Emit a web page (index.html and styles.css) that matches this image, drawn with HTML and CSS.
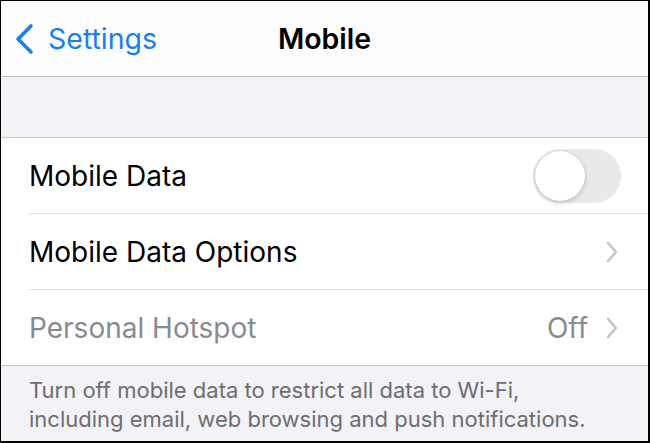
FILE: index.html
```html
<!DOCTYPE html>
<html>
<head>
<meta charset="utf-8">
<link rel="stylesheet" href="styles.css">
</head>
<body>
<div class="frame">
  <header class="nav">
    <div class="back">
      <svg class="back-icon" width="22" height="32" viewBox="0 0 22 32"><path d="M17 3 L4 16 L17 29" fill="none" stroke="#1a7ff2" stroke-width="3.6" stroke-linecap="round" stroke-linejoin="round"/></svg>
      <span class="back-label">Settings</span>
    </div>
    <div class="title">Mobile</div>
  </header>
  <div class="spacer"></div>
  <section class="group">
    <div class="row">
      <span class="label">Mobile Data</span>
      <span class="toggle"><span class="knob"></span></span>
    </div>
    <div class="row">
      <span class="label">Mobile Data Options</span>
      <svg class="chev" width="14" height="22" viewBox="0 0 14 22"><path d="M3 2 L11 11 L3 20" fill="none" stroke="#c4c4c7" stroke-width="2.6" stroke-linecap="round" stroke-linejoin="round"/></svg>
    </div>
    <div class="row last">
      <span class="label dim">Personal Hotspot</span>
      <span class="value">Off</span>
      <svg class="chev" width="14" height="22" viewBox="0 0 14 22"><path d="M3 2 L11 11 L3 20" fill="none" stroke="#c4c4c7" stroke-width="2.6" stroke-linecap="round" stroke-linejoin="round"/></svg>
    </div>
  </section>
  <footer class="note">Turn off mobile data to restrict all data to Wi-Fi,<br>including email, web browsing and push notifications.</footer>
</div>
</body>
</html>
```
FILE: styles.css
```css
html, body {
  margin: 0;
  padding: 0;
  background: #000;
}
.frame {
  width: 647px;
  height: 440px;
  border-style: solid;
  border-color: #000;
  border-width: 1px 2px 2px 1px;
  background: #f2f2f7;
  font-family: Inter, "Liberation Sans", sans-serif;
  overflow: hidden;
  display: flex;
  flex-direction: column;
}
.nav {
  height: 75px;
  background: #fdfdfd;
  border-bottom: 1px solid #b9b9bc;
  display: flex;
  align-items: center;
  position: relative;
}
.back {
  display: flex;
  align-items: center;
  padding-left: 13px;
  gap: 12px;
  color: #1a7ff2;
}
.back-icon {
  display: block;
}
.back-label {
  font-size: 28.5px;
}
.title {
  position: absolute;
  left: 0;
  right: 0;
  text-align: center;
  font-size: 28.5px;
  font-weight: 600;
  color: #000;
  pointer-events: none;
}
.spacer {
  height: 60px;
  border-bottom: 1px solid #c8c8cc;
}
.group {
  background: #fff;
  padding-left: 28px;
  border-bottom: 1px solid #c8c8cc;
}
.row {
  height: 75px;
  display: flex;
  align-items: center;
  padding-right: 28px;
  border-bottom: 1px solid #e2e2e4;
}
.row.last {
  border-bottom: none;
}
.label {
  flex: 1;
  font-size: 28px;
  color: #000;
}
.label.dim, .value {
  color: #8a8a8e;
}
.value {
  font-size: 28px;
  margin-right: 17px;
}
.chev {
  display: block;
  margin-right: 1px;
}
.toggle {
  width: 88px;
  height: 54px;
  border-radius: 27px;
  background: #e9e9eb;
  position: relative;
  margin-right: -1px;
}
.knob {
  position: absolute;
  left: 2px;
  top: 2px;
  width: 50px;
  height: 50px;
  border-radius: 50%;
  background: #fff;
  box-shadow: 0 2px 5px rgba(0,0,0,0.18), 0 0 1px rgba(0,0,0,0.2);
}
.note {
  flex: 1;
  padding: 10px 28px 0;
  font-size: 22px;
  line-height: 29px;
  color: #6d6d72;
}
```
